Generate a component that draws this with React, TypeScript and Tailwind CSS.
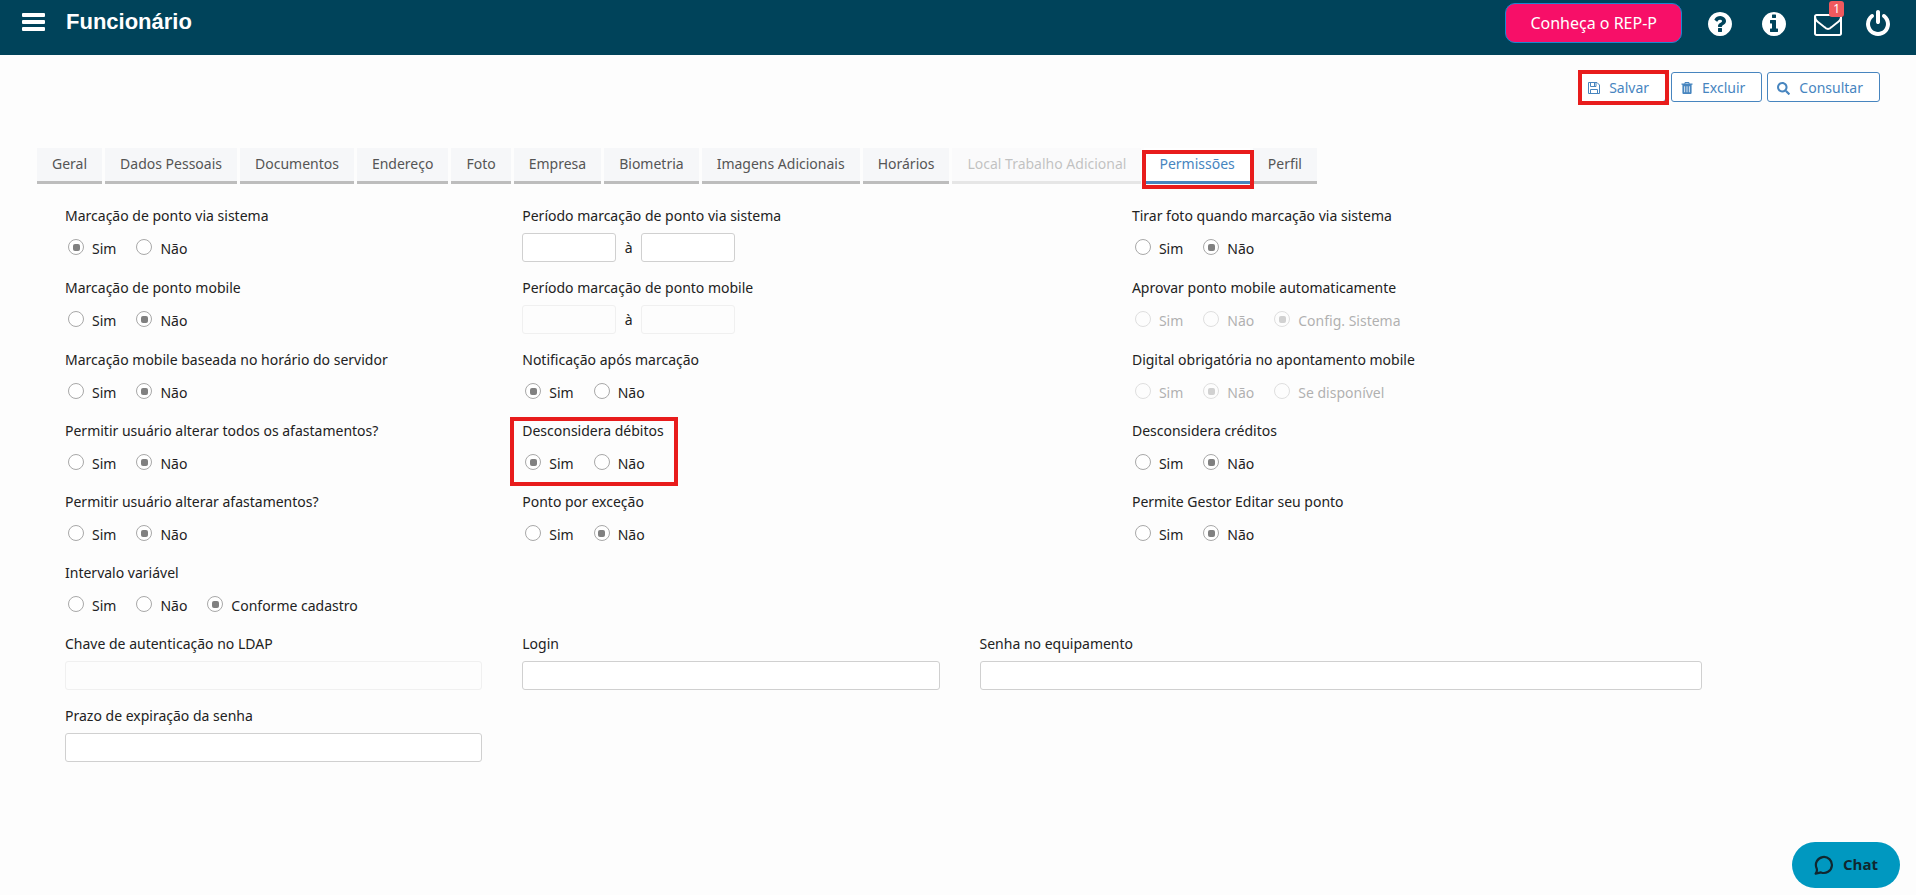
import { useState } from 'react'
import clsx from 'clsx'
import { FaSearch } from 'react-icons/fa'

interface TabItem {
  label: string
  disabled?: boolean
}

interface RadioFieldProps {
  name: string
  label: string
  options?: string[]
  initial: string
  disabled?: boolean
  className?: string
}

interface TextFieldProps {
  id: string
  label: string
  disabled?: boolean
  className?: string
}

const TABS: TabItem[] = [
  { label: 'Geral' },
  { label: 'Dados Pessoais' },
  { label: 'Documentos' },
  { label: 'Endereço' },
  { label: 'Foto' },
  { label: 'Empresa' },
  { label: 'Biometria' },
  { label: 'Imagens Adicionais' },
  { label: 'Horários' },
  { label: 'Local Trabalho Adicional', disabled: true },
  { label: 'Permissões' },
  { label: 'Perfil' },
]

const HEADER_ICONS = {
  question:
    'M1024 1376v-192q0-14-9-23t-23-9h-192q-14 0-23 9t-9 23v192q0 14 9 23t23 9h192q14 0 23-9t9-23zm256-672q0-88-55.5-163t-138.5-116-170-41q-243 0-371 213-15 24 8 42l132 100q7 6 19 6 16 0 25-12 53-68 86-92 34-24 86-24 48 0 85.5 26t37.5 59q0 38-20 61t-68 45q-63 28-115.5 86.5t-52.5 125.5v36q0 14 9 23t23 9h192q14 0 23-9t9-23q0-19 21.5-49.5t54.5-49.5q32-18 49-28.5t46-35 44.5-48 28-60.5 12.5-81zm384 192q0 209-103 385.5t-279.5 279.5-385.5 103-385.5-103-279.5-279.5-103-385.5 103-385.5 279.5-279.5 385.5-103 385.5 103 279.5 279.5 103 385.5z',
  info: 'M1152 1376v-160q0-14-9-23t-23-9h-96v-512q0-14-9-23t-23-9h-320q-14 0-23 9t-9 23v160q0 14 9 23t23 9h96v320h-96q-14 0-23 9t-9 23v160q0 14 9 23t23 9h448q14 0 23-9t9-23zm-128-896v-160q0-14-9-23t-23-9h-192q-14 0-23 9t-9 23v160q0 14 9 23t23 9h192q14 0 23-9t9-23zm640 416q0 209-103 385.5t-279.5 279.5-385.5 103-385.5-103-279.5-279.5-103-385.5 103-385.5 279.5-279.5 385.5-103 385.5 103 279.5 279.5 103 385.5z',
  envelope:
    'M1664 1504v-768q-32 36-69 66-268 206-426 338-51 43-83 67t-86.5 48.5-102.5 24.5h-2q-48 0-102.5-24.5t-86.5-48.5-83-67q-158-132-426-338-37-30-69-66v768q0 13 9.5 22.5t22.5 9.5h1472q13 0 22.5-9.5t9.5-22.5zm0-1051v-24.5l-.5-13-3-12.5-5.5-9-9-7.5-14-2.5h-1472q-13 0-22.5 9.5t-9.5 22.5q0 168 147 284 193 152 401 317 6 5 35 29.5t46 37.5 44.5 31.5 50.5 27.5 43 9h2q20 0 43-9t50.5-27.5 44.5-31.5 46-37.5 35-29.5q208-165 401-317 54-43 100.5-115.5t46.5-131.5zm128-37v1088q0 66-47 113t-113 47h-1472q-66 0-113-47t-47-113v-1088q0-66 47-113t113-47h1472q66 0 113 47t47 113z',
  power:
    'M1664 896q0 156-61 298t-164 245-245 164-298 61-298-61-245-164-164-245-61-298q0-182 80.5-343t226.5-270q43-32 95.5-25t83.5 50q32 42 24.5 94.5t-49.5 84.5q-98 74-151.5 181t-53.5 228q0 104 40.5 198.5t109.5 163.5 163.5 109.5 198.5 40.5 198.5-40.5 163.5-109.5 109.5-163.5 40.5-198.5q0-121-53.5-228t-151.5-181q-42-32-49.5-84.5t24.5-94.5q31-43 84-50t95 25q146 109 226.5 270t80.5 343zm-640-768v640q0 52-38 90t-90 38-90-38-38-90v-640q0-52 38-90t90-38 90 38 38 90z',
}

const inputClass =
  'h-[29px] rounded-[3px] border border-[#d0d0d0] bg-white px-2 outline-none focus:border-[#4785bf] disabled:border-[#f0f0f0] disabled:bg-transparent'

// Red frame drawn around the item that the user should look at
function Highlight({ className }: { className: string }) {
  return (
    <span
      aria-hidden="true"
      className={clsx('pointer-events-none absolute z-10 border-4 border-[#e81c1c]', className)}
    />
  )
}

function HeaderIcon({ name }: { name: keyof typeof HEADER_ICONS }) {
  return (
    <svg viewBox="0 0 1792 1792" className="size-7 fill-current" aria-hidden="true">
      <path d={HEADER_ICONS[name]} />
    </svg>
  )
}

function MenuIcon() {
  return (
    <svg viewBox="0 0 24 20" className="h-5 w-6 fill-current" aria-hidden="true">
      <rect x="0" y="1" width="23" height="4" rx="1" />
      <rect x="0" y="8" width="23" height="4" rx="1" />
      <rect x="0" y="15" width="23" height="4" rx="1" />
    </svg>
  )
}

function FloppyIcon() {
  return (
    <svg viewBox="0 0 12 12" className="size-3 fill-none stroke-current" aria-hidden="true">
      <path d="M.5.5h8.5l2.5 2.5v8.5H.5z" />
      <path d="M2.5.5v4h5.500v-4M6.500.5v3.500M2.500 11.500v-4h7v4" />
    </svg>
  )
}

function TrashIcon() {
  return (
    <svg viewBox="0 0 12 12" className="size-3" aria-hidden="true">
      <path
        className="fill-current"
        fillRule="evenodd"
        d="M4 0h4l.7 1.500H11.500v1.300h-.9V10.800q0 1.200-1 1.200H2.400q-1 0-1-1.200V2.800H.5V1.500h2.800zM4.600.9l-.3.6h3.400l-.3-.6zM3.300 4.200v6h.8v-6zM5.600 4.200v6h.8v-6zM7.900 4.200v6h.8v-6z"
      />
    </svg>
  )
}

function RadioField({
  name,
  label,
  options = ['Sim', 'Não'],
  initial,
  disabled,
  className,
}: RadioFieldProps) {
  const [value, setValue] = useState(initial)

  return (
    <fieldset className={clsx('px-5 pb-[18px]', className)}>
      <legend className="leading-5">{label}</legend>
      <div className={clsx('mt-[13px] ml-[3px] flex gap-5', disabled && 'opacity-35')}>
        {options.map((option) => (
          <label key={option} className="flex items-start gap-2">
            <input
              type="radio"
              name={name}
              value={option}
              checked={value === option}
              disabled={disabled}
              onChange={() => setValue(option)}
              className="grid size-4 appearance-none place-items-center rounded-full border border-[#a8a8a8] bg-white before:size-[7px] before:rounded-xs checked:before:bg-[#808080]"
            />
            <span className="leading-5">{option}</span>
          </label>
        ))}
      </div>
    </fieldset>
  )
}

function TextField({ id, label, disabled, className }: TextFieldProps) {
  return (
    <div className={clsx('px-5 pb-4', className)}>
      <label htmlFor={id} className="block leading-5">
        {label}
      </label>
      <input id={id} type="text" disabled={disabled} className={clsx('mt-[7px] block w-full', inputClass)} />
    </div>
  )
}

function PeriodField({ id, label, disabled, className }: TextFieldProps) {
  return (
    <div className={clsx('px-5 pb-4', className)}>
      <label htmlFor={id} className="block leading-5">
        {label}
      </label>
      <div className="mt-[7px] flex items-center gap-2">
        <input id={id} type="text" disabled={disabled} className={clsx('w-[94px]', inputClass)} />
        <span className="w-[9px] text-center">à</span>
        <input
          type="text"
          aria-label={`${label} (fim)`}
          disabled={disabled}
          className={clsx('w-[94px]', inputClass)}
        />
      </div>
    </div>
  )
}

function Header() {
  return (
    <header className="flex h-[55px] items-start justify-between bg-[#00435a] pr-6 pl-[22px] text-white">
      <div className="flex items-center gap-5 pt-[9px]">
        <button type="button" aria-label="Menu" className="cursor-pointer">
          <MenuIcon />
        </button>
        <h1 className="font-['Liberation_Sans',sans-serif] text-[22px] leading-[26px] font-bold">Funcionário</h1>
      </div>

      <div className="flex items-center pt-[3px]">
        <button
          type="button"
          className="mr-6 h-10 cursor-pointer rounded-[10px] border border-[#1a87d0] bg-[#f70f68] px-6 text-base"
        >
          Conheça o REP-P
        </button>
        <div className="flex items-center gap-[26px] pt-0.5">
          <button type="button" aria-label="Ajuda" className="cursor-pointer">
            <HeaderIcon name="question" />
          </button>
          <button type="button" aria-label="Informações" className="cursor-pointer">
            <HeaderIcon name="info" />
          </button>
          <button type="button" aria-label="Mensagens" className="relative cursor-pointer">
            <HeaderIcon name="envelope" />
            <span className="absolute -top-[9px] -right-0.5 rounded-[3px] bg-[#f0595e] px-1 text-xs leading-4">1</span>
          </button>
          <button type="button" aria-label="Sair" className="-ml-1 cursor-pointer">
            <HeaderIcon name="power" />
          </button>
        </div>
      </div>
    </header>
  )
}

function Toolbar() {
  const buttonClass =
    'flex h-[30px] cursor-pointer items-center gap-[9px] rounded-[3px] border border-[#4785bf] bg-white pt-0.5 pr-4 pl-[9px] text-[#4785bf]'

  return (
    <div className="flex justify-end gap-[5px] pt-[17px] pr-9">
      <div className="relative">
        <button type="button" className={buttonClass}>
          <FloppyIcon />
          Salvar
        </button>
        <Highlight className="-top-0.5 -right-[3px] -bottom-[3px] left-0" />
      </div>
      <button type="button" className={buttonClass}>
        <TrashIcon />
        Excluir
      </button>
      <button type="button" className={buttonClass}>
        <FaSearch className="size-[13px]" />
        Consultar
      </button>
    </div>
  )
}

function Tabs() {
  const [active, setActive] = useState('Permissões')

  return (
    <nav role="tablist" className="mt-[46px] ml-[37px] flex gap-[3px]">
      {TABS.map(({ label, disabled }) => (
        <div key={label} className="relative">
          <button
            type="button"
            role="tab"
            aria-selected={active === label}
            disabled={disabled}
            onClick={() => setActive(label)}
            className={clsx(
              'h-9 border-b-3 px-[15px] pb-0.5 whitespace-nowrap',
              active === label
                ? 'border-[#4785bf] bg-white text-[#4785bf]'
                : 'border-[#bdbdbd] bg-[#f6f7f9] text-[#555]',
              disabled && 'opacity-35'
            )}
          >
            {label}
          </button>
          {label === 'Permissões' && <Highlight className="top-0.5 -right-1 -bottom-[5px] -left-0.5" />}
        </div>
      ))}
    </nav>
  )
}

export default function App() {
  return (
    <div className="min-h-screen bg-[#fdfdfd] font-['Noto_Sans',sans-serif] text-sm text-[#222]">
      <Header />
      <Toolbar />
      <Tabs />

      <form className="mr-[42px] ml-[45px] grid grid-cols-12 pt-[22px]">
        <RadioField name="sistema" label="Marcação de ponto via sistema" initial="Sim" className="col-span-3" />
        <PeriodField id="periodo-sistema" label="Período marcação de ponto via sistema" className="col-span-4" />
        <RadioField name="foto" label="Tirar foto quando marcação via sistema" initial="Não" className="col-span-5" />

        <RadioField name="mobile" label="Marcação de ponto mobile" initial="Não" className="col-span-3" />
        <PeriodField id="periodo-mobile" label="Período marcação de ponto mobile" disabled className="col-span-4" />
        <RadioField
          name="aprovar"
          label="Aprovar ponto mobile automaticamente"
          options={['Sim', 'Não', 'Config. Sistema']}
          initial="Config. Sistema"
          disabled
          className="col-span-5"
        />

        <RadioField name="servidor" label="Marcação mobile baseada no horário do servidor" initial="Não" className="col-span-3" />
        <RadioField name="notificacao" label="Notificação após marcação" initial="Sim" className="col-span-4" />
        <RadioField
          name="digital"
          label="Digital obrigatória no apontamento mobile"
          options={['Sim', 'Não', 'Se disponível']}
          initial="Não"
          disabled
          className="col-span-5"
        />

        <RadioField name="todos-afastamentos" label="Permitir usuário alterar todos os afastamentos?" initial="Não" className="col-span-3" />
        <div className="relative col-span-4">
          <RadioField name="debitos" label="Desconsidera débitos" initial="Sim" />
          <Highlight className="-top-1 bottom-1.5 left-2 w-[168px]" />
        </div>
        <RadioField name="creditos" label="Desconsidera créditos" initial="Não" className="col-span-5" />

        <RadioField name="afastamentos" label="Permitir usuário alterar afastamentos?" initial="Não" className="col-span-3" />
        <RadioField name="excecao" label="Ponto por exceção" initial="Não" className="col-span-4" />
        <RadioField name="gestor" label="Permite Gestor Editar seu ponto" initial="Não" className="col-span-5" />

        <RadioField
          name="intervalo"
          label="Intervalo variável"
          options={['Sim', 'Não', 'Conforme cadastro']}
          initial="Conforme cadastro"
          className="col-span-12"
        />

        <TextField id="ldap" label="Chave de autenticação no LDAP" disabled className="col-span-3" />
        <TextField id="login" label="Login" className="col-span-3" />
        <TextField id="senha" label="Senha no equipamento" className="col-span-5" />
        <TextField id="prazo" label="Prazo de expiração da senha" className="col-span-3 col-start-1" />
      </form>

      <button
        type="button"
        className="fixed right-4 bottom-[7px] flex h-[46px] cursor-pointer items-center gap-[9px] rounded-full bg-[#0098c0] px-[22px] font-['Open_Sans',sans-serif] text-[15px] font-bold text-[#10272f]"
      >
        <svg viewBox="0 0 20 20" className="size-5 fill-none stroke-current" aria-hidden="true">
          <path
            d="M2.600 13.200A8 8 0 1 1 7 17.400L1.600 18.600C2.900 17 3.400 15.400 2.600 13.200z"
            strokeWidth="2.200"
            strokeLinejoin="round"
          />
        </svg>
        Chat
      </button>
    </div>
  )
}
